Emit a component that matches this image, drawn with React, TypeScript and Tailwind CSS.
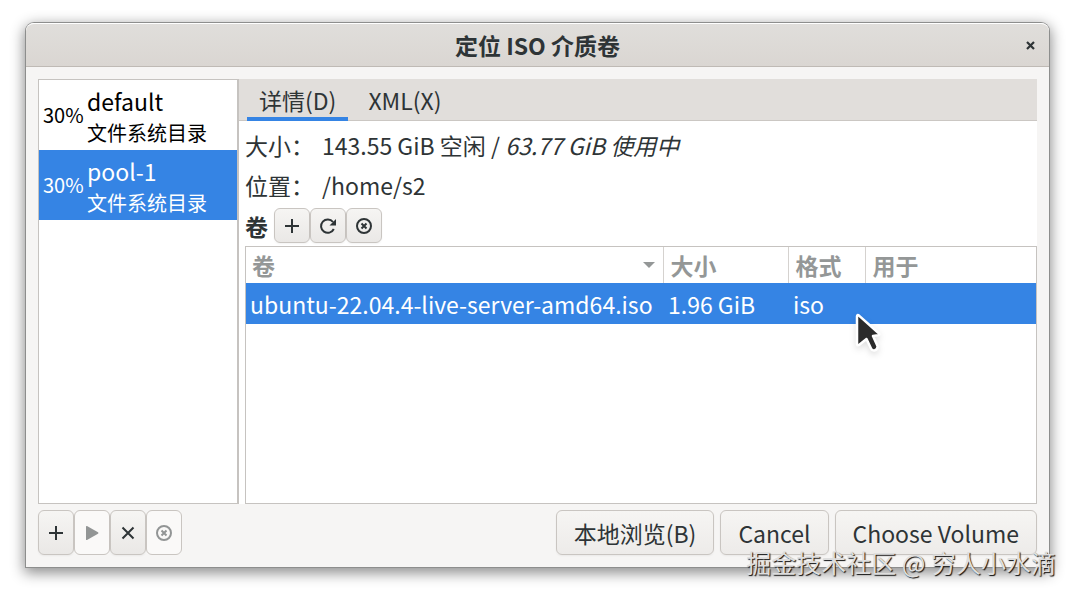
import type { ReactNode } from "react";

type TPool = {
  name: string;
  kind: string;
  usage: string;
  selected: boolean;
};

const pools: TPool[] = [
  { name: "default", kind: "文件系统目录", usage: "30%", selected: false },
  { name: "pool-1", kind: "文件系统目录", usage: "30%", selected: true },
];

const volumes = [
  { name: "ubuntu-22.04.4-live-server-amd64.iso", size: "1.96 GiB", format: "iso", usedBy: "" },
];

const PlusIcon = () => (
  <svg width="16" height="16" viewBox="0 0 16 16" fill="none" stroke="currentColor" strokeWidth="2">
    <path d="M8 1v14M1 8h14" />
  </svg>
);

const CrossIcon = () => (
  <svg width="16" height="16" viewBox="0 0 16 16" fill="none" stroke="currentColor" strokeWidth="2">
    <path d="M2.5 2.5l11 11M13.5 2.5l-11 11" />
  </svg>
);

const PlayIcon = () => (
  <svg width="16" height="16" viewBox="0 0 16 16" fill="currentColor">
    <path d="M2 1.6Q2 .6 3 1L14 7.3Q15 8 14 8.7L3 15Q2 15.4 2 14.4z" />
  </svg>
);

const RefreshIcon = () => (
  <svg width="18" height="18" viewBox="0 0 18 18" fill="none" stroke="currentColor" strokeWidth="2">
    <path d="M14 5A6.7 6.7 0 1 0 14.8 12" />
    <path d="M17 2v6.5h-6.5z" fill="currentColor" stroke="none" />
  </svg>
);

const StopIcon = () => (
  <svg width="18" height="18" viewBox="0 0 18 18" fill="none" stroke="currentColor" strokeWidth="2">
    <circle cx="9" cy="9" r="7" />
    <path d="M6.5 6.5l5 5M11.5 6.5l-5 5" />
  </svg>
);

type ToolButtonProps = {
  label: string;
  tall?: boolean;
  disabled?: boolean;
  children: ReactNode;
};

const ToolButton = ({ label, tall, disabled, children }: ToolButtonProps) => (
  <button
    type="button"
    aria-label={label}
    disabled={disabled}
    className={`flex w-9 items-center justify-center rounded-md border border-[#c9c5c1] ${tall ? "h-[45px]" : "h-[35px]"} ${
      disabled ? "bg-[#faf9f8] text-[#929595]" : "bg-linear-to-b from-[#f6f5f3] to-[#eae8e6] shadow-xs"
    }`}
  >
    {children}
  </button>
);

const DialogButton = ({ children }: { children: ReactNode }) => (
  <button
    type="button"
    className="h-[45px] rounded-md border border-[#c9c5c1] bg-linear-to-b from-[#f6f5f3] to-[#edebe9] px-[17px] shadow-xs"
  >
    {children}
  </button>
);

const PoolItem = ({ pool }: { pool: TPool }) => (
  <li>
    <button
      type="button"
      className={`flex h-[70px] w-full items-center gap-1 pl-1 text-left ${pool.selected ? "bg-[#3584e4] text-white" : "text-black"}`}
    >
      <span className="w-10 text-[20px]">{pool.usage}</span>
      <span className="flex flex-col pt-1">
        <span className="text-[23px] leading-8">{pool.name}</span>
        <span className="text-[20px] leading-8">{pool.kind}</span>
      </span>
    </button>
  </li>
);

const VolumeTable = () => (
  <div className="flex-1 border border-[#c6c3c0] bg-white">
    <table className="w-full table-fixed border-collapse text-left">
      <thead className="text-[#949797]">
        <tr className="h-9">
          <th className="w-[417px] border-r border-[#d5d2cf] px-1.5 py-0">
            <div className="flex items-center justify-between">
              <span>卷</span>
              <svg width="12" height="6" viewBox="0 0 12 6" fill="currentColor" className="mr-0.5">
                <path d="M0 0h12L6 6z" />
              </svg>
            </div>
          </th>
          <th className="w-[125px] border-r border-[#d5d2cf] px-[7px] py-0">大小</th>
          <th className="w-[77px] border-r border-[#d5d2cf] px-[7px] py-0">格式</th>
          <th className="px-[7px] py-0">用于</th>
        </tr>
      </thead>
      <tbody>
        {volumes.map((volume) => (
          <tr key={volume.name} className="h-[41px] bg-[#3584e4] whitespace-nowrap text-white">
            <td className="px-1 py-0">{volume.name}</td>
            <td className="px-[5px] py-0">{volume.size}</td>
            <td className="px-[5px] py-0">{volume.format}</td>
            <td className="px-[5px] py-0">{volume.usedBy}</td>
          </tr>
        ))}
      </tbody>
    </table>
  </div>
);

const MousePointer = () => (
  <svg
    width="30"
    height="42"
    viewBox="0 0 30 42"
    className="absolute top-[312px] left-[853px] drop-shadow-md"
    fill="#2b2b2b"
    stroke="white"
    strokeWidth="2.5"
    strokeLinejoin="round"
  >
    <path d="M4 4.5Q4 2 6 3.6L26 21.5Q27 23 25 23.2L20 24L24.5 34Q25 37.5 21.5 38.5Q19 38.8 18 36.5L13.5 27L6 33Q4 34 4 31.5z" />
  </svg>
);

export default function App() {
  return (
    <div className="relative flex min-h-screen flex-col overflow-hidden bg-white px-[26px] pt-[23px] pb-[29px] font-['Noto_Sans_CJK_SC',sans-serif] text-[23px] leading-8 text-[#2e3436]">
      <div className="flex flex-1 flex-col rounded-t-lg bg-[#f6f5f4] shadow-[0_0_0_1px_#8d8e8d,0_4px_14px_2px_rgba(0,0,0,0.45)]">
        <header className="grid h-11 grid-cols-[1fr_auto_1fr] items-center rounded-t-lg border-t border-b border-t-white border-b-[#bfbab5] bg-linear-to-b from-[#e0dedb] to-[#dad6d2]">
          <h1 className="col-start-2 font-bold">定位 ISO 介质卷</h1>
          <button type="button" aria-label="关闭" className="mr-3.5 justify-self-end">
            <svg width="9" height="9" viewBox="0 0 9 9" fill="none" stroke="currentColor" strokeWidth="2.2">
              <path d="M1 1l7 7M8 1L1 8" />
            </svg>
          </button>
        </header>

        <div className="flex flex-1 flex-col gap-1.5 p-3">
          <main className="flex flex-1">
            <ul className="w-[201px] border border-r-2 border-[#c6c3c0] bg-white">
              {pools.map((pool) => (
                <PoolItem key={pool.name} pool={pool} />
              ))}
            </ul>

            <section className="flex flex-1 flex-col bg-white">
              <div role="tablist" className="flex h-[42px] gap-2 border-b border-[#cbc7c3] bg-[#e1dedb] px-2">
                <button type="button" role="tab" aria-selected="true" className="h-[42px] border-b-4 border-[#3584e4] px-3 pt-1">
                  详情(D)
                </button>
                <button type="button" role="tab" aria-selected="false" className="h-[42px] border-b-4 border-transparent px-3 pt-1">
                  XML(X)
                </button>
              </div>

              <div className="flex flex-1 flex-col pl-1.5">
                <dl className="grid grid-cols-[77px_1fr] gap-y-2 pt-2">
                  <dt>大小：</dt>
                  <dd>
                    143.55 GiB 空闲 / <i>63.77 GiB 使用中</i>
                  </dd>
                  <dt>位置：</dt>
                  <dd>/home/s2</dd>
                </dl>
                <div className="flex items-center pt-[7px] pb-[3px]">
                  <h2 className="mr-1.5 font-bold">卷</h2>
                  <ToolButton label="新建卷">
                    <PlusIcon />
                  </ToolButton>
                  <ToolButton label="刷新卷列表">
                    <RefreshIcon />
                  </ToolButton>
                  <ToolButton label="删除卷">
                    <StopIcon />
                  </ToolButton>
                </div>
                <VolumeTable />
              </div>
            </section>
          </main>

          <footer className="flex justify-between">
            <div className="flex">
              <ToolButton label="添加池" tall>
                <PlusIcon />
              </ToolButton>
              <ToolButton label="启动池" tall disabled>
                <PlayIcon />
              </ToolButton>
              <ToolButton label="停止池" tall>
                <CrossIcon />
              </ToolButton>
              <ToolButton label="删除池" tall disabled>
                <StopIcon />
              </ToolButton>
            </div>
            <div className="flex gap-1.5">
              <DialogButton>本地浏览(B)</DialogButton>
              <DialogButton>Cancel</DialogButton>
              <DialogButton>Choose Volume</DialogButton>
            </div>
          </footer>
        </div>
      </div>

      <MousePointer />
      <p className="absolute right-[19px] bottom-[18px] text-[25px] text-[#dedede] [text-shadow:1px_1px_1px_#111]">
        掘金技术社区 @ 穷人小水滴
      </p>
    </div>
  );
}
